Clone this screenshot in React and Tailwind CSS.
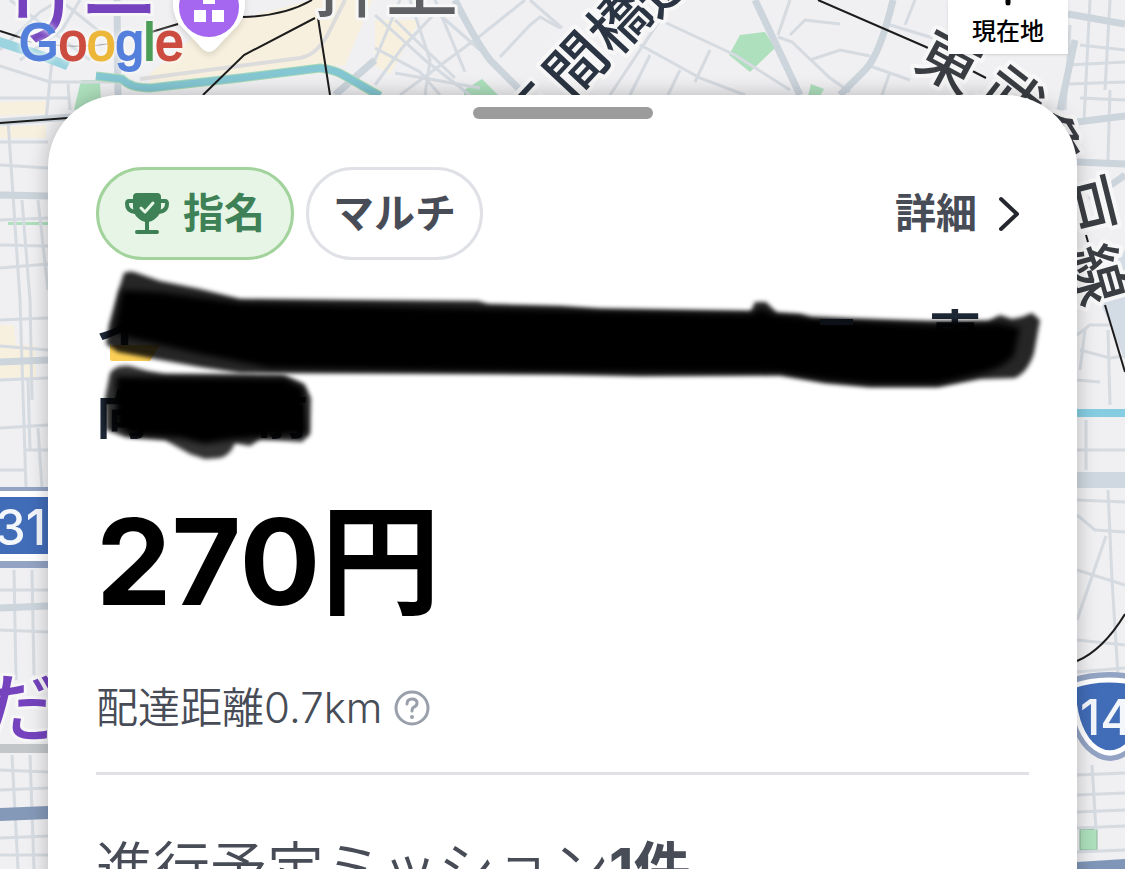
import React from "react";

const minorRoads = [
  "M0 66 L50 82 L118 82",
  "M0 50 L40 12 L60 0",
  "M60 0 L120 48 L118 95",
  "M52 60 L46 120",
  "M0 98 L70 98",
  "M68 84 L70 110",
  "M10 0 L90 60",
  "M80 0 L62 30 L20 60",
  "M375 60 L400 0",
  "M375 15 L425 60 L470 95",
  "M375 48 L420 72 L440 95",
  "M395 20 L455 78",
  "M410 0 L430 60 L425 95",
  "M435 0 L465 72",
  "M375 85 L402 48 L440 8",
  "M395 73 L480 88",
  "M400 95 L480 36 L525 0",
  "M500 57 L530 25 L540 17 L560 28",
  "M440 15 L480 50",
  "M530 0 L562 28",
  "M610 95 L660 20",
  "M660 20 L735 55 L790 90",
  "M635 42 L700 78 L745 95",
  "M650 55 L630 95",
  "M680 70 L668 95",
  "M710 50 L695 82",
  "M778 37 L792 42 L830 78 L850 92",
  "M790 35 L805 20 L840 24",
  "M810 60 L840 50 L870 56",
  "M790 0 L778 35",
  "M870 66 L910 80",
  "M890 72 L882 95",
  "M890 25 L940 40",
  "M915 0 L905 25",
  "M1068 84 L1125 82",
  "M1070 25 L1065 110",
  "M1110 0 L1105 90",
  "M1090 0 L1084 120",
  "M1068 65 L1125 62",
  "M1080 98 L1125 100",
  "M1080 45 L1125 50",
  "M1110 90 L1108 160",
  "M0 142 L48 142",
  "M0 165 L48 168",
  "M0 220 L48 218",
  "M0 245 L48 246",
  "M0 268 L48 264",
  "M22 200 L30 300 L32 400",
  "M38 200 L48 290",
  "M8 120 L20 300 L26 488",
  "M0 320 L48 318",
  "M0 346 L48 350",
  "M0 380 L48 378",
  "M28 380 L30 450",
  "M0 428 L48 425",
  "M25 450 L48 450",
  "M38 428 L42 488",
  "M0 470 L26 470",
  "M0 590 L48 590",
  "M0 630 L48 632",
  "M14 570 L16 680",
  "M32 570 L34 675",
  "M0 770 L48 772",
  "M0 790 L48 788",
  "M12 755 L18 869",
  "M30 755 L34 869",
  "M0 838 L48 836",
  "M0 855 L48 855",
  "M1077 335 L1090 325 L1125 325",
  "M1085 330 L1080 370",
  "M1080 350 L1110 358 L1125 356",
  "M1108 330 L1110 405",
  "M1077 380 L1100 382",
  "M1086 420 L1086 470",
  "M1077 450 L1125 450",
  "M1108 490 L1112 580 L1118 675",
  "M1077 500 L1125 502",
  "M1077 515 L1095 530 L1125 532",
  "M1077 620 L1106 536",
  "M1077 570 L1125 585",
  "M1077 640 L1125 645",
  "M1077 672 L1125 668",
  "M1077 775 L1125 773",
  "M1092 765 L1096 830",
  "M1077 795 L1125 793",
  "M1077 812 L1125 810",
  "M1077 828 L1125 826",
  "M1077 852 L1125 850",
];

const majorRoads = [
  "M117 0 L118 95",
  "M0 122 L72 117",
  "M375 60 L335 95",
  "M455 0 Q475 40 490 60 L525 95",
  "M755 0 L800 95",
  "M893 0 Q880 55 865 70 L840 95",
  "M1068 14 L1125 24",
  "M1077 122 L1125 116",
  "M1077 162 L1125 164",
  "M1090 200 L1125 175",
  "M0 195 L48 196",
  "M0 362 L48 360",
  "M0 608 L48 606",
  "M1075 40 L1060 110",
];

const waterPath = "M96 76 L122 79 Q130 88 150 88 L240 78 L320 68 Q336 70 345 76 L380 96";

const lineLabels = [
  { char: "東", x: 951, y: 58, rotate: 28 },
  { char: "武", x: 1015, y: 94, rotate: 38 },
  { char: "亀", x: 1058, y: 142, rotate: 58 },
  { char: "戸", x: 1091, y: 204, rotate: 76 },
  { char: "線", x: 1101, y: 273, rotate: 74 },
];

const streetLabels = [
  { char: "五", x: 529, y: 110 },
  { char: "間", x: 573, y: 62 },
  { char: "橋", x: 616, y: 18 },
  { char: "通", x: 658, y: -20 },
];

const MapView = () => (
  <svg
    className="absolute inset-0 h-full w-full font-['Noto_Sans_CJK_JP',sans-serif]"
    viewBox="0 0 1125 869"
    preserveAspectRatio="xMidYMin slice"
    aria-label="地図"
  >
    <rect width="1125" height="869" fill="#f0eff1" />

    {/* blocks */}
    <g fill="#f7f0de">
      <path d="M150 74 L195 35 L245 18 L312 0 L372 0 L345 66 L318 64 L150 83Z" />
      <path d="M375 20 L420 20 L390 74 L375 66Z" />
      <path d="M0 102 L46 101 L46 114 L0 116Z" />
      <path d="M0 127 L46 125 L46 138 L0 138Z" />
      <path d="M0 325 L14 325 L16 345 L35 345 L36 377 L0 378Z" />
    </g>
    <g fill="#aee0bd">
      <path d="M81 80 L100 80 L101 105 L74 110Z" />
      <path d="M464 90 L482 79 L498 95 L464 96Z" />
      <path d="M729 55 L740 35 L765 32 L775 48 L750 72Z" />
      <path d="M811 84 L824 89 L820 96 L808 96Z" />
      <path d="M1080 829 H1097 V850 H1080Z" stroke="#8db69a" />
      <path d="M8 222 H48 V225 H8Z" />
    </g>

    <g fill="none" stroke="#d5dbe1" strokeWidth="3">
      {minorRoads.map((d) => (
        <path key={d} d={d} />
      ))}
    </g>
    <g fill="none" stroke="#ccd4dc" strokeWidth="7">
      {majorRoads.map((d) => (
        <path key={d} d={d} />
      ))}
    </g>
    <path d="M140 79 L300 58 Q318 55 330 30 L345 0" fill="none" stroke="#dddcdc" strokeWidth="4" />
    <path d="M1077 472 H1125 V488 H1077Z" fill="#cfd8e0" />
    <path d="M1095 290 L1125 250 V360Z" fill="#d3dce5" />

    {/* water */}
    <path d={waterPath} fill="none" stroke="#a6d8b4" strokeWidth="9" />
    <path d={waterPath} fill="none" stroke="#84c6d2" strokeWidth="7" />
    <path d="M0 37 L18 43 L45 52 L70 62 L66 70 L40 60 L0 47Z" fill="#9bd3de" />
    <path d="M1077 409 H1125 V417 H1077Z" fill="#86cde2" />
    <path d="M0 808 L48 806 V819 L0 821Z" fill="#8499b8" />
    <path d="M1077 862 L1125 859 V869 H1077Z" fill="#7f96b8" />
    <path d="M0 744 H48 V753 H0Z" fill="#c3c6c8" />

    {/* railways */}
    <g fill="none" stroke="#1c1c1c" strokeWidth="2">
      <path d="M0 31 L25 39" />
      <path d="M25 41 Q75 51 120 42" stroke="#9a9a9e" strokeWidth="1" />
      <path d="M148 33 L178 24" />
      <path d="M243 17 Q285 16 312 0" />
      <path d="M203 95 L244 55 L315 18" />
      <path d="M318 18 L330 95" />
      <path d="M0 123 L68 118" />
      <path d="M818 0 L926 47 L986 78" />
      <path d="M1086 235 L1088 242" />
      <path d="M1105 305 L1125 372" />
      <path d="M1125 614 Q1103 650 1077 661" />
    </g>

    {/* labels */}
    <g
      fontWeight="500"
      fill="#3a3d42"
      stroke="#f7f7f8"
      strokeWidth="8"
      strokeLinejoin="round"
      paintOrder="stroke"
      textAnchor="middle"
      dominantBaseline="central"
    >
      {lineLabels.map((l) => (
        <text key={l.char} fontSize="60" transform={`translate(${l.x} ${l.y}) rotate(${l.rotate})`}>
          {l.char}
        </text>
      ))}
      {streetLabels.map((l) => (
        <text
          key={l.char}
          fontSize="60"
          fill="#2b3442"
          transform={`translate(${l.x} ${l.y}) rotate(-47)`}
        >
          {l.char}
        </text>
      ))}
    </g>
    <g fontWeight="500" stroke="#f7f7f8" strokeWidth="6" strokeLinejoin="round" paintOrder="stroke">
      <text x="314" y="11" fontSize="72" fill="#5f6064">
        押上
      </text>
      <text x="2" y="39" fontSize="78" fill="#7443bd">
        リー
      </text>
      <text x="-20" y="736" fontSize="76" fill="#7443bd">
        だ
      </text>
    </g>

    {/* road shields */}
    <path d="M0 487 H60 V568 H0Z" fill="#93a3c3" />
    <path d="M0 491 H60 V561 H0Z" fill="#fff" />
    <path d="M0 497 H60 V554 H0Z" fill="#416cb8" />
    <path
      d="M1072 684 Q1107 672 1150 684 Q1150 726 1130 745 Q1110 765 1090 745 Q1072 726 1072 684Z"
      fill="#416cb8"
      stroke="#93a3c3"
      strokeWidth="12"
    />
    <path
      d="M1073 686 Q1107 674 1148 686 Q1148 726 1129 744 Q1110 762 1091 744 Q1074 726 1073 686Z"
      fill="#416cb8"
      stroke="#fff"
      strokeWidth="5"
    />
    <g fill="#f3f6fb" fontFamily="Inter, sans-serif" fontSize="49" fontWeight="500">
      <text x="-5" y="545">
        31
      </text>
      <text x="1080" y="735">
        14
      </text>
    </g>

    {/* place pin */}
    <path
      d="M209 52 Q204 52 197 43 L179 24 A36 36 0 1 1 239 24 L221 43 Q214 52 209 52Z"
      fill="#fff"
      className="drop-shadow-md"
    />
    <circle cx="209" cy="7" r="30" fill="#a566f0" />
    <path d="M194 10h12v12h-12z M212 10h12v12h-12z M203 -8h12v12h-12z" fill="#fff" />

    {/* attribution */}
    <text
      x="19"
      y="60"
      fontFamily="'Liberation Sans', sans-serif"
      fontSize="51"
      strokeWidth="2"
      className="drop-shadow-[0_0_3px_#ffffff]"
    >
      <tspan fill="#5480dc" stroke="#5480dc">G</tspan>
      <tspan fill="#cc4c40" stroke="#cc4c40">o</tspan>
      <tspan fill="#ecb73a" stroke="#ecb73a">o</tspan>
      <tspan fill="#5480dc" stroke="#5480dc">g</tspan>
      <tspan fill="#4c9d57" stroke="#4c9d57">l</tspan>
      <tspan fill="#cc4c40" stroke="#cc4c40">e</tspan>
    </text>
  </svg>
);

const TrophyIcon = () => (
  <svg className="h-11 w-11 shrink-0" viewBox="0 0 44 44" fill="none" aria-hidden="true">
    <path
      d="M12 1 H32 Q36 1 36 5 V15 Q36 22 31 26 Q27 30 22 30 Q17 30 13 26 Q8 22 8 15 V5 Q8 1 12 1Z"
      fill="#3f8156"
    />
    <path
      d="M9 9 H4 Q2 9 2 12 Q2 19 10 20 M35 9 H40 Q42 9 42 12 Q42 19 34 20"
      stroke="#3f8156"
      strokeWidth="4"
      strokeLinecap="round"
    />
    <path d="M22 29 V40 M12 40 H32" stroke="#3f8156" strokeWidth="4" strokeLinecap="round" />
    <path
      d="M16 16 L20 20 L28 11"
      stroke="#e7f5e6"
      strokeWidth="3"
      strokeLinecap="round"
      strokeLinejoin="round"
    />
  </svg>
);

const HelpIcon = () => (
  <svg className="h-9 w-9" viewBox="0 0 36 36" fill="none" stroke="#9aa0ab" aria-hidden="true">
    <circle cx="18" cy="18" r="16" strokeWidth="3" />
    <path
      d="M13 14 Q13 9 18 9 Q23 9 23 13 Q23 16 20 17 Q18 18 18 21"
      strokeWidth="3"
      strokeLinecap="round"
    />
    <circle cx="18" cy="27" r="2" fill="#9aa0ab" stroke="none" />
  </svg>
);

// marker strokes that hide the shop name
const Redaction = () => (
  <svg
    className="absolute -top-9 left-0 h-[210px] w-[960px] max-w-none"
    viewBox="96 260 960 210"
    aria-hidden="true"
  >
    <defs>
      <filter id="edge" x="-5%" y="-10%" width="110%" height="120%">
        <feGaussianBlur stdDeviation="2" />
      </filter>
      <filter id="core" x="-5%" y="-10%" width="110%" height="120%">
        <feGaussianBlur stdDeviation="3" />
      </filter>
    </defs>
    <path d="M110 345 H160 L150 361 H112 Q110 361 110 358Z" fill="#fbcf55" />
    <path
      d="M124 273 Q130 270 137 273 L160 281 L200 289 L240 299 L478 301 L488 304 L560 306 L600 309 L751 311 L755 302 L766 302 L777 313 L800 314 L812 318 L930 321 L988 321 L1000 315 L1012 319 L1022 317 L1032 313 L1040 320 L1034 353 Q1028 372 1015 378 L980 379 L938 387 L870 387 L825 383 L780 375 L640 376 L560 374 L240 373 L200 367 L150 358 L118 352 L106 344 L109 325 L118 292Z"
      fill="#000"
      fillOpacity="0.85"
      filter="url(#edge)"
    />
    <path
      d="M122 290 L160 292 L240 303 L330 305 L600 311 L751 314 L762 308 L772 314 L810 318 L930 325 L1000 323 L1020 328 L1014 355 Q1005 368 975 375 L938 384 L870 384 L825 380 L780 373 L560 372 L270 368 L200 354 L130 338 L114 332Z"
      fill="#000"
      filter="url(#core)"
    />
    <path
      d="M110 373 Q116 364 130 366 L148 371 L165 374 L283 375 L304 384 L311 398 L310 434 L302 442 L260 439 L250 446 L235 443 Q230 456 220 458 L205 459 L190 454 L165 440 L125 437 L106 430 L105 398Z"
      fill="#000"
      fillOpacity="0.8"
      filter="url(#edge)"
    />
    <path
      d="M116 376 L160 377 L285 378 L304 388 L307 434 L230 440 L205 444 L180 438 L130 435 L116 424Z"
      fill="#000"
      filter="url(#core)"
    />
    <path d="M820 319 H853 V325 H820Z" fill="#0c1118" />
  </svg>
);

export default function App() {
  return (
    <div className="relative flex h-screen flex-col overflow-hidden font-['Inter','Noto_Sans_CJK_JP',sans-serif]">
      <MapView />

      <button
        type="button"
        className="absolute top-0 right-[57px] flex h-[54px] w-[120px] flex-col items-center bg-white text-2xl font-medium text-black shadow-sm"
      >
        <svg className="h-4 w-6 shrink-0" viewBox="0 0 24 16" aria-hidden="true">
          <path d="M12 0 V3" stroke="#000" strokeWidth="5" strokeLinecap="round" />
        </svg>
        現在地
      </button>

      <main className="relative mx-12 mt-[95px] flex-1 rounded-t-[72px] bg-white px-12 pt-3 shadow-[0_0_20px_rgba(0,0,0,0.25)]">
        <div className="mx-auto h-3 w-[180px] rounded-full bg-[#9c9c9c]" />

        <div className="mt-12 flex items-center gap-3 text-[41px] font-semibold">
          <span className="flex h-[93px] items-center gap-[14px] rounded-full border-3 border-[#a3d39c] bg-[#e7f5e6] px-[26px] text-[#3f8156]">
            <TrophyIcon />
            指名
          </span>
          <span className="flex h-[93px] items-center rounded-full border-3 border-[#dfe1e7] px-6 text-[#474c57]">
            マルチ
          </span>
          <button type="button" className="ml-auto flex items-center gap-3 text-[#474c57]">
            詳細
            <svg className="h-10 w-10" viewBox="0 0 40 40" fill="none" aria-hidden="true">
              <path
                d="M12 5 L28 20 L12 35"
                stroke="#24272d"
                strokeWidth="4"
                strokeLinecap="round"
                strokeLinejoin="round"
              />
            </svg>
          </button>
        </div>

        <h1 className="relative mt-9 text-[52px] leading-[80px] font-semibold text-[#1c2635]">
          <span className="flex justify-between pr-12">
            <span>イ</span>
            <span>東</span>
          </span>
          <span className="flex w-[212px] justify-between">
            <span>向</span>
            <span>前</span>
          </span>
          <Redaction />
        </h1>

        <p className="mt-9 text-[120px] leading-[140px] font-bold text-black">
          270<span className="font-semibold">円</span>
        </p>

        <div className="mt-10 flex items-center gap-3 text-[42px] leading-[72px] font-[350] text-[#474c57]">
          <span>配達距離0.7km</span>
          <button type="button" aria-label="配達距離について">
            <HelpIcon />
          </button>
        </div>

        <hr className="mt-7 border-t-3 border-[#dfe1e7]" />

        <h2 className="mt-13 text-[57px] leading-[84px] font-[350] whitespace-nowrap text-[#474c57]">
          進行予定ミッション<b className="font-bold">1件</b>
        </h2>
      </main>
    </div>
  );
}
